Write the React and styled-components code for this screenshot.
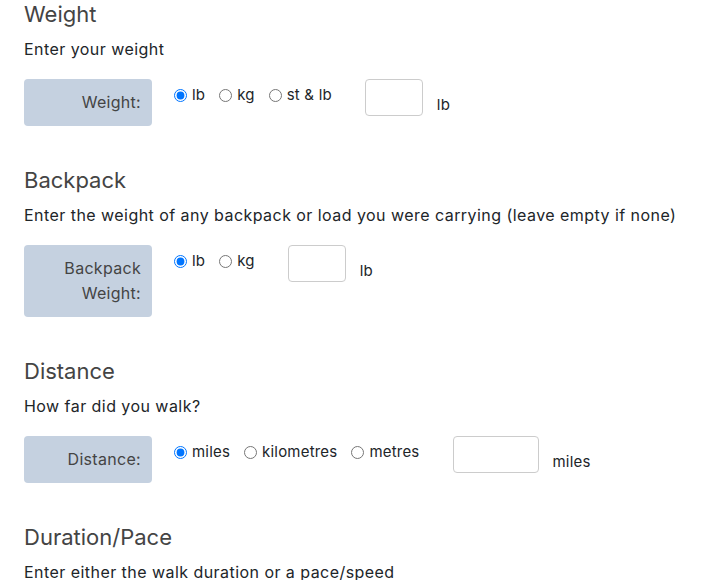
import { createGlobalStyle, styled } from "styled-components";

const GlobalStyle = createGlobalStyle`
    body {
        margin: 0;
        background: #fff;
        font-family: Inter, "Noto Sans", sans-serif;
        color: #212529;
    }
`;

const Page = styled.div`
    padding: 0 24px;
`;

const Section = styled.section`
    display: flex;
    flex-direction: column;
    margin-bottom: 40px;
`;

const Heading = styled.h2`
    margin: 0;
    font-size: 22px;
    line-height: 28px;
    font-weight: 400;
    color: #444;
`;

const Desc = styled.p`
    margin: 9px 0 18px;
    font-size: 16px;
    letter-spacing: 0.45px;
    line-height: 24px;
`;

const Row = styled.div`
    display: flex;
    align-items: flex-start;
`;

const LabelBox = styled.div`
    width: 128px;
    box-sizing: border-box;
    padding: 11px 11px;
    background: #c5d1e0;
    border-radius: 4px;
    text-align: right;
    font-size: 16px;
    letter-spacing: 0.3px;
    line-height: 25px;
    color: #444;
`;

const Radios = styled.div`
    display: flex;
    gap: 14px;
    margin-left: 22px;
    padding-top: 4px;
    font-size: 15px;
    letter-spacing: 0.2px;
    line-height: 24px;
`;

const RadioLabel = styled.label`
    display: flex;
    align-items: center;
    gap: 5px;

    input {
        margin: 0;
        width: 13px;
        height: 13px;
    }
`;

const NumberInput = styled.input`
    box-sizing: border-box;
    width: ${props => props.$w}px;
    height: 37px;
    margin-left: 33px;
    border: 1px solid #ccc;
    border-radius: 4px;
    font-size: 15px;
    padding: 4px 8px;
`;

const Unit = styled.span`
    margin-left: 14px;
    margin-top: 14px;
    font-size: 15px;
    letter-spacing: 0.2px;
    line-height: 24px;
`;

const sections = [
    {
        title: "Weight",
        desc: "Enter your weight",
        label: ["Weight:"],
        name: "weightUnit",
        options: ["lb", "kg", "st & lb"],
        inputW: 58,
        unit: "lb",
    },
    {
        title: "Backpack",
        desc: "Enter the weight of any backpack or load you were carrying (leave empty if none)",
        label: ["Backpack", "Weight:"],
        name: "packUnit",
        options: ["lb", "kg"],
        inputW: 58,
        unit: "lb",
    },
    {
        title: "Distance",
        desc: "How far did you walk?",
        label: ["Distance:"],
        name: "distUnit",
        options: ["miles", "kilometres", "metres"],
        inputW: 86,
        unit: "miles",
    },
];

export default function App() {
    return (
        <Page>
            <GlobalStyle />
            {sections.map(s => (
                <Section key={s.title}>
                    <Heading>{s.title}</Heading>
                    <Desc>{s.desc}</Desc>
                    <Row>
                        <LabelBox>
                            {s.label.map(l => <div key={l}>{l}</div>)}
                        </LabelBox>
                        <Radios>
                            {s.options.map((o, i) => (
                                <RadioLabel key={o}>
                                    <input type="radio" name={s.name} defaultChecked={i === 0} />
                                    {o}
                                </RadioLabel>
                            ))}
                        </Radios>
                        <NumberInput type="text" $w={s.inputW} />
                        <Unit>{s.unit}</Unit>
                    </Row>
                </Section>
            ))}
            <Section>
                <Heading>Duration/Pace</Heading>
                <Desc>Enter either the walk duration or a pace/speed</Desc>
            </Section>
        </Page>
    );
}
